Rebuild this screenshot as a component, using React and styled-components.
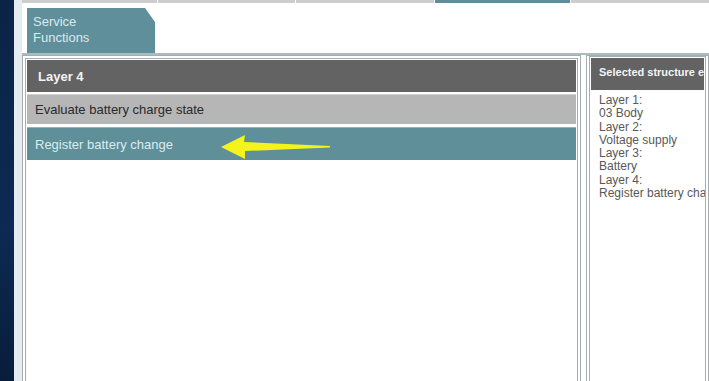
import React from 'react';
import styled, { createGlobalStyle } from 'styled-components';

const GlobalStyle = createGlobalStyle`
  html, body {
    margin: 0;
    padding: 0;
    width: 709px;
    height: 381px;
    overflow: hidden;
    background: #ffffff;
    font-family: 'Liberation Sans', Arial, sans-serif;
  }
`;

const Screen = styled.div`
  display: flex;
  width: 709px;
  height: 381px;
  overflow: hidden;
`;

const DesktopEdge = styled.div`
  width: 14px;
  flex-shrink: 0;
  background: linear-gradient(180deg, #0a2447 0%, #0c2a52 60%, #081d3b 100%);
`;

const Window = styled.div`
  flex: 1;
  display: flex;
  flex-direction: column;
  background: #ffffff;
  border-left: 8px solid #e4ecf1;
  min-width: 0;
`;

const TopTabs = styled.div`
  display: flex;
  height: 3px;
  gap: 1px;
  background: #ffffff;
`;

const TopTab = styled.div`
  width: ${(p) => p.$w}px;
  flex-shrink: 0;
  background: ${(p) => (p.$active ? '#5e8e98' : '#cdcdcd')};
`;

const TabRow = styled.div`
  display: flex;
  padding: 5px 0 0 5px;
  border-bottom: 2px solid #a9bcc1;
`;

const FunctionTab = styled.div`
  width: 128px;
  height: 45px;
  box-sizing: border-box;
  padding: 6px 0 0 6px;
  background: #5e8f9a;
  clip-path: polygon(0 0, 118px 0, 128px 14px, 128px 100%, 0 100%);
  color: #dbe9ee;
  font-size: 13px;
  line-height: 16px;
`;

const ContentRow = styled.div`
  flex: 1;
  display: flex;
  gap: 5px;
  min-height: 0;
`;

const Panel = styled.div`
  width: ${(p) => (p.$w ? `${p.$w}px` : 'auto')};
  flex: ${(p) => (p.$w ? '0 0 auto' : '1')};
  box-sizing: border-box;
  border: 1px solid #a4adb0;
  border-bottom: none;
  padding: ${(p) => (p.$tight ? 0 : 2)}px 2px 0;
  display: flex;
  min-width: 0;
`;

const PanelInner = styled.div`
  flex: 1;
  border: 1px solid #a4adb0;
  border-bottom: none;
  padding: 1px 1px 0;
  display: flex;
  flex-direction: column;
  gap: 2px;
  min-width: 0;
  overflow: hidden;
`;

const Header = styled.div`
  height: 32px;
  box-sizing: border-box;
  flex-shrink: 0;
  display: flex;
  align-items: center;
  padding-left: ${(p) => p.$pad}px;
  padding-bottom: ${(p) => p.$lift || 0}px;
  background: #636363;
  color: #f4f4f4;
  font-weight: bold;
  font-size: ${(p) => p.$size}px;
  white-space: nowrap;
  overflow: hidden;
`;

const ListRow = styled.div`
  position: relative;
  box-sizing: border-box;
  height: ${(p) => p.$h}px;
  flex-shrink: 0;
  display: flex;
  align-items: center;
  padding-left: 8px;
  background: ${(p) => (p.$selected ? '#5f8f99' : '#b6b6b6')};
  color: ${(p) => (p.$selected ? '#dcebee' : '#2a2a2a')};
  border-top: 1px solid ${(p) => (p.$selected ? '#8fb4bb' : '#d2d2d2')};
  font-size: 13px;
  margin-top: ${(p) => (p.$selected ? 1 : 0)}px;
`;

const Pointer = styled.svg`
  position: absolute;
  left: 192px;
  top: 5px;
`;

const Details = styled.div`
  padding: 2px 0 0 8px;
  color: #585858;
  font-size: 12px;
  line-height: 13.3px;
  white-space: nowrap;
`;

const tabs = [
  { w: 135 },
  { w: 137 },
  { w: 138 },
  { w: 135, active: true },
  { w: 140 },
];

const structure = [
  'Layer 1:',
  '03 Body',
  'Layer 2:',
  'Voltage supply',
  'Layer 3:',
  'Battery',
  'Layer 4:',
  'Register battery change',
];

export default function App() {
  return (
    <>
      <GlobalStyle />
      <Screen>
        <DesktopEdge />
        <Window>
          <TopTabs>
            {tabs.map((t, i) => (
              <TopTab key={i} $w={t.w} $active={t.active} />
            ))}
          </TopTabs>
          <TabRow>
            <FunctionTab>
              Service
              <br />
              Functions
            </FunctionTab>
          </TabRow>
          <ContentRow>
            <Panel $w={559}>
              <PanelInner>
                <Header $pad={11} $size={13}>Layer 4</Header>
                <ListRow $h={30}>Evaluate battery charge state</ListRow>
                <ListRow $h={33} $selected>
                  Register battery change
                  <Pointer width="114" height="28" viewBox="0 0 114 28">
                    <polygon
                      points="2,14 26,2 25,9 111,13 111,14.5 26,18 26,26"
                      fill="#f4f41c"
                    />
                  </Pointer>
                </ListRow>
              </PanelInner>
            </Panel>
            <Panel $tight>
              <PanelInner>
                <Header $pad={8} $size={11} $lift={5}>
                  Selected structure elements
                </Header>
                <Details>
                  {structure.map((line, i) => (
                    <div key={i}>{line}</div>
                  ))}
                </Details>
              </PanelInner>
            </Panel>
          </ContentRow>
        </Window>
      </Screen>
    </>
  );
}
